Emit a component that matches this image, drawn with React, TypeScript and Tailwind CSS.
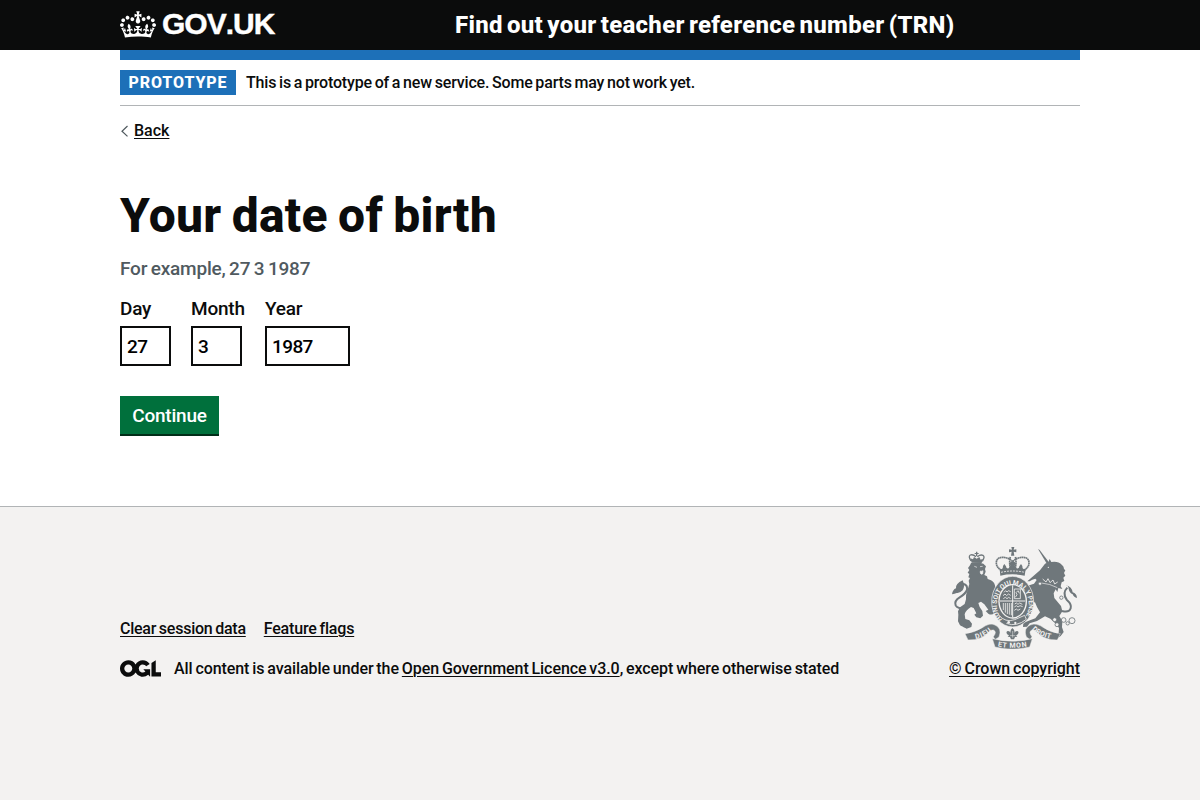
import type { ReactNode } from "react";

const CROWN =
  "M25 30.2c3.5 1.5 7.7-.2 9.1-3.7 1.5-3.6-.2-7.8-3.9-9.2-3.6-1.4-7.6.3-9.1 3.9-1.4 3.5.3 7.5 3.9 9zM9 39.5c3.6 1.5 7.8-.2 9.2-3.7 1.5-3.6-.2-7.8-3.9-9.1-3.6-1.5-7.6.2-9.1 3.8-1.4 3.5.3 7.5 3.8 9zM4.4 57.2c3.5 1.5 7.7-.2 9.1-3.8 1.5-3.6-.2-7.7-3.9-9.1-3.5-1.5-7.6.3-9.1 3.8-1.4 3.5.3 7.6 3.9 9.1zm38.3-21.4c3.5 1.5 7.7-.2 9.1-3.8 1.5-3.6-.2-7.7-3.9-9.1-3.6-1.5-7.6.3-9.1 3.8-1.3 3.6.4 7.7 3.9 9.1zm64.4-5.6c-3.6 1.5-7.8-.2-9.1-3.7-1.5-3.6.2-7.8 3.8-9.2 3.6-1.4 7.7.3 9.2 3.9 1.3 3.5-.4 7.5-3.9 9zm15.9 9.3c-3.6 1.5-7.7-.2-9.1-3.7-1.5-3.6.2-7.8 3.7-9.1 3.6-1.5 7.7.2 9.2 3.8 1.5 3.5-.3 7.5-3.8 9zm4.7 17.7c-3.6 1.5-7.8-.2-9.2-3.8-1.5-3.6.2-7.7 3.9-9.1 3.6-1.5 7.7.3 9.2 3.8 1.3 3.5-.4 7.6-3.9 9.1zM89.3 35.8c-3.6 1.5-7.8-.2-9.2-3.8-1.4-3.6.2-7.7 3.9-9.1 3.6-1.5 7.7.3 9.2 3.8 1.4 3.6-.3 7.7-3.9 9.1zM69.7 17.7l8.9 4.7V9.3l-8.9 2.8c-.2-.3-.5-.6-.9-.9L72.4 0H59.6l3.5 11.2c-.3.3-.6.5-.9.9l-8.8-2.8v13.1l8.8-4.7c.3.3.6.7.9.9l-5 15.4v.1c-.2.8-.4 1.6-.4 2.4 0 4.1 3.1 7.5 7 8.1h.2c.3 0 .7.1 1 .1.4 0 .7 0 1-.1h.2c4-.6 7.1-4.1 7.1-8.1 0-.8-.1-1.7-.4-2.4V34l-5.1-15.4c.4-.2.7-.6 1-.9zM66 92.8c16.9 0 32.8 1.1 47.1 3.2 4-16.9 8.9-26.7 14-33.5l-9.6-3.4c1 4.9 1.1 7.2 0 10.2-1.5-1.4-3-4.3-4.2-8.7L108.6 76c2.8-2 5-3.2 7.5-3.3-4.4 9.4-10 11.9-13.6 11.2-4.3-.8-6.3-4.6-5.6-7.9 1-4.7 5.7-5.9 8-.5 4.3-8.7-3-11.4-7.6-8.8 7.1-7.2 7.9-13.5 2.1-21.1-8 6.1-8.1 12.3-4.5 20.8-4.7-5.4-12.1-2.5-9.5 6.2 3.4-5.2 7.9-2 7.2 3.1-.6 4.3-6.4 7.8-13.5 7.2-10.3-.9-10.9-8-11.2-13.8 2.5-.5 7.1 1.8 11 7.3L80.2 60c-4.1 4.4-8 5.3-12.3 5.4 1.4-4.4 8-11.6 8-11.6H55.5s6.4 7.2 7.9 11.6c-4.2-.1-8-1-12.3-5.4l1.4 16.4c3.9-5.5 8.5-7.7 10.9-7.3-.3 5.8-.9 12.8-11.1 13.8-7.2.6-12.9-2.9-13.5-7.2-.7-5 3.8-8.3 7.1-3.1 2.7-8.7-4.6-11.6-9.4-6.2 3.7-8.5 3.6-14.7-4.6-20.8-5.8 7.6-5 13.9 2.2 21.1-4.7-2.6-11.9.1-7.7 8.8 2.3-5.5 7.1-4.2 8.1.5.7 3.3-1.3 7.1-5.7 7.9-3.5.7-9-1.8-13.5-11.2 2.5.1 4.7 1.3 7.5 3.3l-4.7-15.4c-1.2 4.4-2.7 7.2-4.3 8.7-1.1-3-.9-5.3 0-10.2l-9.5 3.4c5 6.9 9.9 16.7 14 33.5 14.8-2.1 30.8-3.2 47.7-3.2z";

const OGL =
  "M421.5 142.8V.1l-50.7 32.3v161.1h112.4v-50.7zm-122.3-9.6A47.12 47.12 0 0 1 221 97.8c0-26 21.1-47.1 47.1-47.1 16.7 0 31.4 8.7 39.7 21.8l42.7-27.2A97.63 97.63 0 0 0 268.1 0c-36.5 0-68.3 20.1-85.1 49.7A98 98 0 0 0 97.8 0C43.9 0 0 43.9 0 97.8s43.9 97.8 97.8 97.8c36.5 0 68.3-20.1 85.1-49.7a97.76 97.76 0 0 0 149.6 25.4l19.4 22.2h3v-87.8h-80l24.3 27.5zM97.8 145c-26 0-47.1-21.1-47.1-47.1s21.1-47.1 47.1-47.1 47.1 21.1 47.1 47.1S123.8 145 97.8 145";

const INK = "#6f777b";
const PAPER = "#f3f2f1";

function RoyalArms() {
  return (
    <svg viewBox="36 36 375 306" className="h-[102px] w-[125px]" fill={INK} aria-label="Royal coat of arms">
      {/* lion */}
      <path d="M91 70l4 13 30 1 4-13-7 3-4-8-8 5-8-5-3 7z" />
      <path d="M108 50h4v4h4v3h-4v6h-4v-6h-4v-3h4z" />
      <path
        d="M93 78q-9-14-2-18 8-3 17 5M127 79q9-14 2-18-8-3-17 4"
        fill="none" stroke={INK} strokeWidth="4"
      />
      <path d="M93 84q20-4 37 2l8 8-3 8 2 8-4 10 8 4 2 8 10 4q12 6 13 22l-6 12-3 18q-1 12 4 22l4 8-2 16q-8 8-18 2l-8-8 8-4-12-16-10-8-8 4 4 12 8 12 2 14-8 8-12-3-6-8 6-4-8-16-8-3q-16 10-19 22l2 14 12 4 8 10-2 10-14 5-12-6-8-4-6-12 1-20-1-10 6-12 14-10 4-14q-2-12 4-26l6-20-2-10 4-8-5-2 3-10-5-4 5-8-4-6 6-8z" />
      <path
        d="M76 221q-24 0-29-10-5-14 12-24 17-10 22-22 3-16-12-19"
        fill="none" stroke={INK} strokeWidth="6"
      />
      <path d="M36 178q2-14 12-18-2-14 20-24 8 18 0 30-10 10-18 8-6 3-14 4z" />
      <path d="M103 94l8 3M120 95l8-1M121 108q5 2 8-1l-1 9q-5 4-7-2z" stroke={PAPER} strokeWidth="2" fill={PAPER} />
      <path d="M66 274l-3 8M76 280l-2 8M88 283l-1 7" stroke={PAPER} strokeWidth="2" fill="none" />

      {/* unicorn */}
      <path d="M294 42l5 3 29 38-7 4z" />
      <path d="M300 106l15-20 10-4 4-10 5 9q20-4 32 9 6 4 6 12l4 4-4 8 4 8-6 6 3 10-8 4-3 12 5 8-12-3-3 12-5-8-6 12 2 14 10 12 10 12 4 16-9 14 9 16-1 18 5 14-9 12-16 12-2-10 12-12 1-14-12-15-14-13-16-7-24 14-22 7-8 10-12 1 1-12 20-8 16-6 14-18-9-16-6-14-18 2-10 14 4 8-9 2-8-11 3-8 9-13-17-5-6-12-6-8 6-6 14 9 16-2-5-8 10-13 14-5 8-11-4-4-9 3-8 5-7 0z" />
      <circle cx="325" cy="97" r="2" fill={PAPER} />
      <path d="M308 132l10 9 6-10 6 12 9-8 5 12 9-6" fill="none" stroke={PAPER} strokeWidth="2.5" />
      <path d="M304 144q26 2 48 14" fill="none" stroke={PAPER} strokeWidth="2" />
      <path
        d="M366 228q22 6 26-8 4-12-12-26-14-20 2-36"
        fill="none" stroke={INK} strokeWidth="6"
      />
      <path d="M378 150q7 1 8 12 2 12 12 16 4 10 13 11-1-14-13-17-2-16-20-22z" />
      <g fill={PAPER} stroke={INK} strokeWidth="2.5">
        <circle cx="344" cy="254" r="6" /><circle cx="351" cy="269" r="6" />
        <circle cx="371" cy="255" r="7" /><circle cx="383" cy="265" r="5" />
        <circle cx="396" cy="257" r="9" /><circle cx="364" cy="188" r="5" />
        <circle cx="300" cy="146" r="5" />
      </g>

      {/* shield and garter */}
      <ellipse cx="218" cy="200" rx="63" ry="76" stroke={PAPER} strokeWidth="2" />
      <ellipse cx="218" cy="199" rx="43" ry="52" fill={PAPER} />
      <ellipse cx="218" cy="199" rx="39" ry="48" />
      <path d="M218 151v96M180 198h76" stroke={PAPER} strokeWidth="3" />
      <g stroke={PAPER} strokeWidth="2.5" fill="none">
        <path d="M192 172l5-5 4 4 5-4 6 3M189 182l6-5 5 5 5-5 7 4M190 191l6-4 5 4 5-4 6 4" />
        <path d="M223 162h18v29h-18zM226 187l5-8-3-6 6-6 4 8" />
        <path d="M190 204v21M196 204v29M202 204v33M208 204v35M214 204v37" />
        <path d="M224 207l5-3 5 4 5-4 8 4M223 216l6-4 5 4 6-4 8 3M223 226l6-4 5 4 7-4" />
      </g>
      <path d="M176 240q20 24 48 14l30-13 5 12q-30 24-60 12" fill="none" stroke={PAPER} strokeWidth="2.5" />
      <circle cx="206" cy="262" r="4" fill={PAPER} /><circle cx="226" cy="264" r="3.5" fill={PAPER} />
      <path id="garter" d="M187 253a48 59 0 1 1 63 0" fill="none" />
      <text fill={PAPER} fontSize="20" className="font-[Roboto] font-bold">
        <textPath href="#garter" textLength="252" lengthAdjust="spacingAndGlyphs">HONI SOIT QUI MAL Y PENSE</textPath>
      </text>

      {/* imperial crown */}
      <path d="M214 36h9l-2 8 8-1v9l-8-2 2 12h-10l2-12-8 2v-9l9 1z" />
      <path
        d="M184 106q-16-10-15-24 1-14 17-15 20 0 32 13 12-13 32-13 16 1 17 15 1 14-15 24M211 66q-4 16 0 32M226 66q4 16 0 32"
        fill="none" stroke={INK} strokeWidth="5" strokeDasharray="5 1"
      />
      <path d="M179 102q10 3 10-9l4-6 5 7q0 8 8 6l6-9q-8-5-1-9l7-4 7 4q7 4-1 9l6 9q8 2 8-6l5-7 4 6q0 12 10 9l-3 20q-37-8-73 0z" />
      <path d="M183 112q35-8 71 0" fill="none" stroke={PAPER} strokeWidth="2.5" strokeDasharray="6 3" />

      {/* motto ribbon */}
      <path d="M75 296q30-4 52-18 22-16 38-8 22 10 12 36l-12 8-5-9q12-15 0-20-8-2-16 8-18 22-60 22zM361 296q-30-4-50-18-22-16-40-8-22 10-12 36l12 8 5-9q-12-15 0-20 8-2 16 8 20 22 60 22z" stroke={PAPER} strokeWidth="1.5" />
      <path d="M157 311q61 15 120 0l-8 25q-52 13-104 0z" stroke={PAPER} strokeWidth="1.5" />
      <path d="M217 279q10 8 5 18 3-11 12-8 5 8-6 12l4 4-7 1-3 7h-9l-3-7-7-1 4-4q-11-4-6-12 9-3 12 8-5-10 4-18z" />
      <path d="M218 288v20M210 302h16" stroke={PAPER} strokeWidth="1.5" />
      <path id="dieu" d="M107 312q30-6 52-28" fill="none" />
      <path id="droit" d="M275 283q24 24 62 29" fill="none" />
      <path id="etmon" d="M173 334q43 9 91 0" fill="none" />
      <g fill={PAPER} fontSize="21" className="font-[Roboto] font-bold">
        <text><textPath href="#dieu" textLength="54">DIEU</textPath></text>
        <text><textPath href="#droit" textLength="64">DROIT</textPath></text>
        <text><textPath href="#etmon" textLength="88">ET MON</textPath></text>
      </g>
    </svg>
  );
}

function Link({ children, className = "" }: { children: ReactNode; className?: string }) {
  return (
    <a href="#" className={`underline decoration-1 underline-offset-[2px] ${className}`}>
      {children}
    </a>
  );
}

function DateField({ label, value, className }: { label: string; value: string; className: string }) {
  return (
    <label className="flex flex-col text-[19px] leading-[25px] tracking-[-0.2px]">
      {label}
      <input
        defaultValue={value}
        className={`mt-[5px] h-10 border-2 border-[#0b0c0c] bg-white px-[5px] text-[19px] tracking-[-0.6px] text-black outline-none ${className}`}
      />
    </label>
  );
}

export default function App() {
  return (
    <div className="flex min-h-screen flex-col bg-[#f3f2f1] font-['Roboto',sans-serif] text-base font-medium leading-5 text-[#0b0c0c]">
      <header className="h-[50px] bg-[#0b0c0c] text-white">
        <div className="mx-auto flex h-full w-[960px] items-center">
          <a href="#" className="flex w-[335px] items-center">
            <svg viewBox="0 0 132 97" className="mb-0.5 h-[27px] w-9" fill="currentColor" aria-hidden="true">
              <path fillRule="evenodd" d={CROWN} />
            </svg>
            <span className="mb-0.5 ml-1.5 font-['Liberation_Sans',sans-serif] text-[30px] font-bold leading-[30px] tracking-[-1px] [font-kerning:none] [-webkit-text-stroke:0.4px_currentColor]">
              GOV.UK
            </span>
          </a>
          <a href="#" className="whitespace-nowrap text-2xl font-extrabold leading-[30px] tracking-[0.28px] [word-spacing:-2px]">
            Find out your teacher reference number (TRN)
          </a>
        </div>
      </header>

      <div className="border-b border-[#b1b4b6] bg-white">
        <div className="mx-auto h-[456px] w-[960px]">
          <div className="h-2.5 bg-[#1d70b8]" />
          <div className="flex h-[46px] items-center border-b border-[#b1b4b6]">
            <strong className="flex h-[25px] w-[116px] items-center justify-center bg-[#1d70b8] text-base font-extrabold tracking-[0.9px] text-white">
              PROTOTYPE
            </strong>
            <span className="ml-2.5 whitespace-nowrap tracking-[-0.18px] [word-spacing:-1px]">
              This is a prototype of a new service. Some parts may not work yet.
            </span>
          </div>
          <div className="mt-[15px] flex h-5 items-center">
            <svg viewBox="0 0 14 20" className="h-5 w-[14px]" fill="none" stroke="#505a5f" aria-hidden="true">
              <path d="M7.5 5L2 10.2l5.5 5.2" strokeWidth="1.2" />
            </svg>
            <Link>Back</Link>
          </div>

          <main className="pt-[50px]">
            <h1 className="text-[48px] font-extrabold leading-[50px] tracking-[0.28px] [word-spacing:-2px]">
              Your date of birth
            </h1>
            <p className="mt-[15px] text-[19px] leading-[25px] tracking-[-0.2px] text-[#505a5f] [word-spacing:-1px]">
              For example, 27 3 1987
            </p>
            <div className="mt-[15px] flex">
              <div className="w-[71px]"><DateField label="Day" value="27" className="w-[51px]" /></div>
              <div className="w-[74px]"><DateField label="Month" value="3" className="w-[51px]" /></div>
              <DateField label="Year" value="1987" className="w-[85px]" />
            </div>
            <button className="mt-[30px] flex h-10 w-[99px] items-center justify-center border-b-2 border-[#002d18] bg-[#00703c] pt-0.5 text-[19px] tracking-[-0.2px] text-white">
              Continue
            </button>
          </main>
        </div>
      </div>

      <footer className="mx-auto flex w-[960px] items-end justify-between pt-10 tracking-[-0.08px] [word-spacing:-1px]">
        <div>
          <nav className="flex gap-[18px]">
            <Link className="tracking-[-0.25px]">Clear session data</Link>
            <Link className="tracking-[-0.18px]">Feature flags</Link>
          </nav>
          <div className="mt-5 flex items-center">
            <svg viewBox="0 0 483.2 195.7" className="mb-0.5 h-[17px] w-[41px]" fill="currentColor" aria-label="OGL">
              <path d={OGL} />
            </svg>
            <span className="ml-[13px] whitespace-nowrap">
              All content is available under the <Link>Open Government Licence v3.0</Link>, except where otherwise stated
            </span>
          </div>
        </div>
        <div className="flex flex-col items-end">
          <div className="mr-[3px]"><RoyalArms /></div>
          <Link className="mt-2.5 tracking-[-0.03px]">© Crown copyright</Link>
        </div>
      </footer>
    </div>
  );
}
